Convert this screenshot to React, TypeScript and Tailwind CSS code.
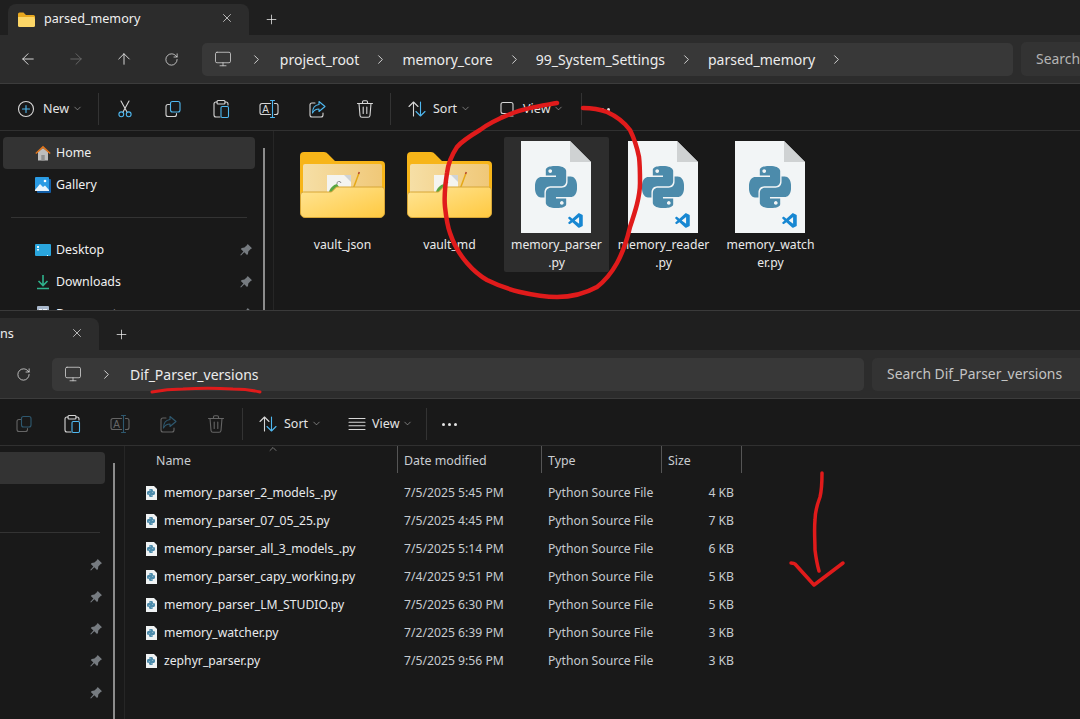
import React from "react";
import { ArrowLeft, ArrowRight, ArrowUp, RotateCw, ChevronRight, ChevronDown, ChevronUp, X, Plus, Monitor } from "lucide-react";
import { SiPython } from "react-icons/si";
import { VscVscode } from "react-icons/vsc";

const GREY = "#d6d6d6";
const BLUE = "#4fb8f0";

function Ico({ dim, children }: { dim?: boolean; children: React.ReactNode }) {
  return (
    <svg width="20" height="20" viewBox="0 0 20 20" fill="none" strokeWidth="1.1" strokeLinecap="round" strokeLinejoin="round" className={dim ? "opacity-40" : ""}>
      {children}
    </svg>
  );
}

const CutIcon = () => (
  <Ico>
    <path d="M6 2l6 11M14 2L8 13" stroke={GREY} />
    <circle cx="6.3" cy="15.3" r="2.4" stroke={BLUE} />
    <circle cx="13.7" cy="15.3" r="2.4" stroke={BLUE} />
  </Ico>
);
const CopyIcon = ({ dim }: { dim?: boolean }) => (
  <Ico dim={dim}>
    <path d="M6.5 5.5H5A2 2 0 0 0 3 7.5v8a2 2 0 0 0 2 2h6.5a2 2 0 0 0 2-2v-1" stroke={GREY} />
    <rect x="7.5" y="2.5" width="9.5" height="10.5" rx="2" stroke={BLUE} />
  </Ico>
);
const PasteIcon = () => (
  <Ico>
    <path d="M9 18H5a2 2 0 0 1-2-2V5a2 2 0 0 1 2-2h1M14 3h1a2 2 0 0 1 2 2v1" stroke={GREY} />
    <rect x="6" y="1.5" width="8" height="3.5" rx="1" stroke={GREY} />
    <rect x="10" y="7.5" width="7.5" height="11" rx="1.2" stroke={BLUE} />
  </Ico>
);
const RenameIcon = ({ dim }: { dim?: boolean }) => (
  <Ico dim={dim}>
    <path d="M11.5 4.500H3a2 2 0 0 0-2 2v7a2 2 0 0 0 2 2h8.500M15.500 4.500H17a2 2 0 0 1 2 2v7a2 2 0 0 1-2 2h-1.500" stroke={GREY} />
    <path d="M11.500 1.500h4M11.500 18.500h4M13.500 1.500v17" stroke={BLUE} />
    <text x="3.200" y="13.500" fontSize="10" fill={GREY} fontFamily="Liberation Sans" stroke="none">A</text>
  </Ico>
);
const ShareIcon = ({ dim }: { dim?: boolean }) => (
  <Ico dim={dim}>
    <path d="M8 4H5a2 2 0 0 0-2 2v10a2 2 0 0 0 2 2h9a2 2 0 0 0 2-2v-2" stroke={GREY} />
    <path d="M12 2.5l6 5-6 5V10c-3 0-5 1-6.5 4 0-5 2.500-8 6.500-8.500z" stroke={BLUE} />
  </Ico>
);
const TrashIcon = ({ dim }: { dim?: boolean }) => (
  <Ico dim={dim}>
    <path d="M2.500 4.500h15M7.500 4.500V3a1.200 1.200 0 0 1 1.200-1.200h2.600A1.200 1.200 0 0 1 12.500 3v1.500M4 4.500l1 12a2 2 0 0 0 2 1.800h6a2 2 0 0 0 2-1.800l1-12M8.200 8v6.500M11.800 8v6.500" stroke={GREY} />
  </Ico>
);
const SortIcon = () => (
  <Ico>
    <path d="M6.500 17V3M2 7.500L6.500 3 11 7.500" stroke={GREY} />
    <path d="M13.500 3v14M9 12.500l4.500 4.500 4.500-4.500" stroke={BLUE} />
  </Ico>
);
const TileViewIcon = () => (
  <Ico>
    <rect x="4" y="3.500" width="12" height="11" rx="2" stroke={GREY} />
    <path d="M4 17h12" stroke={GREY} />
  </Ico>
);
const ListViewIcon = () => (
  <Ico>
    <path d="M2 4.500h16M2 8.200h16M2 11.800h16M2 15.500h16" stroke={GREY} />
  </Ico>
);
const NewIcon = () => (
  <Ico>
    <circle cx="10" cy="10" r="7.500" stroke={GREY} />
    <path d="M10 6.500v7M6.500 10h7" stroke={BLUE} />
  </Ico>
);

const Dots = () => (
  <div className="flex gap-[3px]">
    <span className="w-[3px] h-[3px] rounded-full bg-[#e4e4e4]" />
    <span className="w-[3px] h-[3px] rounded-full bg-[#e4e4e4]" />
    <span className="w-[3px] h-[3px] rounded-full bg-[#e4e4e4]" />
  </div>
);

const Sep = () => <div className="w-px h-8 bg-[#333333]" />;

function IconBtn({ children }: { children: React.ReactNode }) {
  return <div className="w-12 h-8 flex items-center justify-center">{children}</div>;
}

function CmdLabel({ text, className }: { text: string; className?: string }) {
  return (
    <div className={`flex items-center ${className ?? ""}`}>
      <span className="text-[12.500px] text-[#e4e4e4] mt-[1px]">{text}</span>
      <ChevronDown size={11} strokeWidth={1.300} color="#b8b8b8" className="ml-[3px] -mt-[2px]" />
    </div>
  );
}

function PinIcon() {
  return (
    <svg width="14" height="14" viewBox="0 0 14 14" fill="#767b80">
      <path d="M8.700 1l4.300 4.300-1.300.7-2.400 2.400-.3 2.600-1 1L5.300 9.300 2 12.600l-.8-.6 3.200-3.400L1.800 6l1-1 2.600-.4L7.900 2.300z" />
    </svg>
  );
}

function FolderTab() {
  return (
    <svg width="17" height="15" viewBox="0 0 17 15">
      <path d="M0 2a1.500 1.500 0 0 1 1.500-1.500h4L8 3h7.500A1.500 1.500 0 0 1 17 4.500V6H0z" fill="#e8a81f" />
      <path d="M0 5h15.500A1.500 1.500 0 0 1 17 6.500v7a1.500 1.500 0 0 1-1.500 1.500h-14A1.500 1.500 0 0 1 0 13.500z" fill="#fcd667" />
    </svg>
  );
}

function BigFolder({ id }: { id: string }) {
  return (
    <svg width="85" height="67" viewBox="0 0 85 67">
      <defs>
        <linearGradient id={id} x1="0" y1="0" x2="1" y2="1">
          <stop offset="0" stopColor="#ffe596" />
          <stop offset="1" stopColor="#ffc940" />
        </linearGradient>
        <linearGradient id={`${id}b`} x1="0" y1="0" x2="1" y2="0">
          <stop offset="0" stopColor="#f6dfa6" />
          <stop offset="1" stopColor="#f0c878" />
        </linearGradient>
      </defs>
      <path d="M0 5a4 4 0 0 1 4-4h20a5 5 0 0 1 4 2l7 7h46a4 4 0 0 1 4 4v30H0z" fill="#f7b519" />
      <rect x="3" y="13" width="79" height="40" rx="2" fill={`url(#${id}b)`} />
      <rect x="27" y="24" width="24" height="17" fill="#f4f4f0" />
      <path d="M44 24l7 7v-7z" fill="#cfd3d6" />
      <path d="M29 41c1-4 4-7 8-8l2 3-5 5z" fill="#59a541" />
      <path d="M37 33a2 2 0 1 1 4-1" stroke="#8a8a8a" fill="none" />
      <path d="M52 41l7-19" stroke="#e5a817" strokeWidth="1.500" />
      <path d="M58.500 23l.8-2" stroke="#b6452e" strokeWidth="1.500" />
      <path d="M.5 44a3 3 0 0 1 3-3h28l5-5h45a3 3 0 0 1 3 3v23a4.500 4.500 0 0 1-4.500 4.500H5A4.500 4.500 0 0 1 .5 62z" fill={`url(#${id})`} stroke="#d7a637" strokeWidth="1" />
    </svg>
  );
}

function BigPyFile() {
  return (
    <div className="relative w-[70px] h-[92px]">
      <svg width="70" height="92" viewBox="0 0 70 92" className="block">
        <path d="M0 0h49l21 21v71H0z" fill="#f2f5f6" />
        <path d="M49 0l21 21H49z" fill="#cfd2d3" />
      </svg>
      <SiPython size={42} color="#4c8bab" className="absolute left-[14px] top-[25px]" />
      <VscVscode size={18} color="#1787d2" className="absolute left-[46px] top-[71px]" />
    </div>
  );
}

function SmallPyFile() {
  return (
    <div className="relative w-[11px] h-[14px]">
      <svg width="11" height="14" viewBox="0 0 11 14" className="block">
        <path d="M0 0h8l3 3v11H0z" fill="#f0f3f4" />
      </svg>
      <SiPython size={8} color="#4c8bab" className="absolute left-[1px] top-[3px]" />
    </div>
  );
}

function HomeIcon() {
  return (
    <svg width="16" height="16" viewBox="0 0 16 16">
      <path d="M3 7l5-4 5 4v8.500H3z" fill="#bdbdbd" />
      <rect x="6.300" y="10" width="3.400" height="5.500" fill="#8f8f8f" />
      <path d="M.3 8L8 .8 15.700 8l-1 1L8 2.900 1.300 9z" fill="#e2761c" />
    </svg>
  );
}
function GalleryIcon() {
  return (
    <svg width="16" height="16" viewBox="0 0 16 16">
      <rect x="2" y="2" width="14" height="14" rx="1" fill="#135fa8" />
      <rect x="0" y="0" width="14" height="14" rx="1" fill="#2a9be4" />
      <path d="M0 13l5-6 3 3 2-1.500L14 13v1H0z" fill="#e8f4fc" />
      <circle cx="10" cy="4" r="1.300" fill="#ffffff" />
    </svg>
  );
}
function DesktopIcon() {
  return (
    <svg width="16" height="13" viewBox="0 0 16 13">
      <rect width="16" height="12" rx="1" fill="#2aa6de" />
      <rect x="2" y="2" width="2" height="2" fill="#e6f6fd" />
      <rect x="2" y="5" width="2" height="1.500" fill="#e6f6fd" />
      <rect x="12" y="11" width="1" height="1" fill="#e6f6fd" />
    </svg>
  );
}
function DownloadIcon() {
  return (
    <svg width="16" height="16" viewBox="0 0 16 16" fill="none" stroke="#2fb38d" strokeWidth="1.600">
      <path d="M8 1v10M3.500 7L8 11.500 12.500 7M2 14.500h12" />
    </svg>
  );
}
function DocsIcon() {
  return (
    <svg width="16" height="16" viewBox="0 0 16 16">
      <rect x="2" width="12" height="16" rx="1" fill="#a9b8cc" />
      <rect x="4" y="3" width="3" height="2" fill="#f1f4f8" />
      <rect x="8" y="3" width="4" height="1" fill="#f1f4f8" />
    </svg>
  );
}

function Crumbs({ parts }: { parts: string[] }) {
  return (
    <>
      <Monitor size={18} strokeWidth={1.100} color="#d0d0d0" className="ml-[12px] mr-[17px]" />
      {parts.map((p, i) => (
        <React.Fragment key={p}>
          <ChevronRight size={15} strokeWidth={1.500} color="#dcdcdc" />
          <span className={`${i === 0 ? "ml-[16px]" : "ml-[14px]"} mr-[14px] text-[14px] text-[#ececec] mt-[1px]`}>{p}</span>
        </React.Fragment>
      ))}
    </>
  );
}

const files = [
  ["memory_parser_2_models_.py", "7/5/2025 5:45 PM", "4 KB"],
  ["memory_parser_07_05_25.py", "7/5/2025 4:45 PM", "7 KB"],
  ["memory_parser_all_3_models_.py", "7/5/2025 5:14 PM", "6 KB"],
  ["memory_parser_capy_working.py", "7/4/2025 9:51 PM", "5 KB"],
  ["memory_parser_LM_STUDIO.py", "7/5/2025 6:30 PM", "5 KB"],
  ["memory_watcher.py", "7/2/2025 6:39 PM", "3 KB"],
  ["zephyr_parser.py", "7/5/2025 9:56 PM", "3 KB"],
];

const tiles = [
  { name: ["memory_parser", ".py"], selected: true },
  { name: ["memory_reader", ".py"] },
  { name: ["memory_watch", "er.py"] },
];

function Tile({ selected, icon, lines }: { selected?: boolean; icon: React.ReactNode; lines: string[] }) {
  return (
    <div className={`w-[105px] h-[135px] rounded-[2px] flex flex-col items-center ${selected ? "bg-[#2d2d2d]" : ""}`}>
      <div className="h-[99px] flex items-start justify-center">{icon}</div>
      <div className="text-[12.200px] leading-[18px] text-center text-[#eaeaea] whitespace-nowrap">
        {lines.map(l => <div key={l}>{l}</div>)}
      </div>
    </div>
  );
}

function NavRow({ icon, label, pin }: { icon: React.ReactNode; label: string; pin?: boolean }) {
  return (
    <div className="h-8 ml-[3px] w-[252px] flex items-center relative">
      <div className="ml-[32px] w-[16px] flex justify-center">{icon}</div>
      <span className="ml-[5px] text-[12.400px] text-[#f0f0f0]">{label}</span>
      {pin && <div className="absolute right-[2px] top-[9px]"><PinIcon /></div>}
    </div>
  );
}

export default function App() {
  return (
    <div className="relative w-[1080px] h-[719px] overflow-hidden bg-[#191919] font-['Noto_Sans',sans-serif]">
      {/* top window */}
      <div className="h-[310px] flex flex-col overflow-hidden">
        <div className="h-[35px] pt-[4px] bg-[#1f1f1f] flex items-center shrink-0">
          <div className="ml-[8px] w-[241px] h-full flex items-center rounded-t-lg bg-[#2c2c2c] relative pl-[10px]">
            <FolderTab />
            <span className="ml-[9px] text-[12.600px] text-[#f0f0f0]">parsed_memory</span>
            <X size={14} strokeWidth={1.200} color="#f0f0f0" className="absolute right-[15px] top-[7px]" />
          </div>
          <Plus size={15} strokeWidth={1.200} color="#f0f0f0" className="ml-[15px]" />
        </div>
        <div className="h-[49px] bg-[#2c2c2c] border-b border-[#3c3c3c] flex items-center pl-[4px] shrink-0">
          <IconBtn><ArrowLeft size={18} strokeWidth={1.200} color="#e8e8e8" /></IconBtn>
          <IconBtn><ArrowRight size={18} strokeWidth={1.200} color="#6b6b6b" /></IconBtn>
          <IconBtn><ArrowUp size={18} strokeWidth={1.200} color="#e8e8e8" /></IconBtn>
          <IconBtn><RotateCw size={15} strokeWidth={1.200} color="#e8e8e8" /></IconBtn>
          <div className="ml-[6px] w-[812px] h-[33px] rounded-[5px] bg-[#383838] flex items-center">
            <Crumbs parts={["project_root", "memory_core", "99_System_Settings", "parsed_memory"]} />
            <ChevronRight size={15} strokeWidth={1.500} color="#dcdcdc" />
          </div>
          <div className="ml-[8px] flex-1 h-[34px] rounded-l-[5px] bg-[#333333] flex items-center pl-[15px] text-[13.900px] text-[#b4b4b4]">Search</div>
        </div>
        <div className="h-[47px] pt-[4px] bg-[#191919] border-b border-[#303030] flex items-center shrink-0">
          <div className="w-[98px] flex items-center pl-[16px]">
            <NewIcon />
            <CmdLabel text="New" className="ml-[7px]" />
          </div>
          <Sep />
          <div className="w-[2px]" />
          <IconBtn><CutIcon /></IconBtn>
          <IconBtn><CopyIcon /></IconBtn>
          <IconBtn><PasteIcon /></IconBtn>
          <IconBtn><RenameIcon /></IconBtn>
          <IconBtn><ShareIcon /></IconBtn>
          <IconBtn><TrashIcon /></IconBtn>
          <div className="w-[1px]" />
          <Sep />
          <div className="ml-[16px]"><SortIcon /></div>
          <CmdLabel text="Sort" className="ml-[6px]" />
          <div className="ml-[26px]"><TileViewIcon /></div>
          <CmdLabel text="View" className="ml-[6px]" />
          <div className="ml-[17px]"><Sep /></div>
          <div className="ml-[13px]"><Dots /></div>
        </div>
        <div className="flex-1 flex min-h-0">
          <div className="w-[263px] pt-[6px] shrink-0">
            <div className="relative">
              <div className="absolute left-[3px] top-0 w-[252px] h-8 rounded-[4px] bg-[#333333]" />
              <NavRow icon={<HomeIcon />} label="Home" />
            </div>
            <NavRow icon={<GalleryIcon />} label="Gallery" />
            <div className="h-px bg-[#333333] ml-[11px] w-[236px] my-[16px]" />
            <NavRow icon={<DesktopIcon />} label="Desktop" pin />
            <NavRow icon={<DownloadIcon />} label="Downloads" pin />
            <NavRow icon={<DocsIcon />} label="Documents" pin />
          </div>
          <div className="w-[2px] mt-[17px] bg-[#8c8c8c] shrink-0" />
          <div className="w-[8px] shrink-0" />
          <div className="w-px bg-[#262626] shrink-0" />
          <div className="flex-1 pl-[16px] pt-[6px] flex gap-[2px]">
            <Tile icon={<div className="pt-[14px]"><BigFolder id="f1" /></div>} lines={["vault_json"]} />
            <Tile icon={<div className="pt-[14px]"><BigFolder id="f2" /></div>} lines={["vault_md"]} />
            {tiles.map(t => (
              <Tile key={t.name[0]} selected={t.selected} icon={<div className="pt-[4px] pr-[2px]"><BigPyFile /></div>} lines={t.name} />
            ))}
          </div>
        </div>
      </div>

      {/* bottom window */}
      <div className="h-[409px] flex flex-col border-t border-[#3a3a3a] overflow-hidden">
        <div className="h-[39px] pt-[7px] bg-[#1f1f1f] flex items-center shrink-0">
          <div className="w-[99px] h-full rounded-tr-lg bg-[#2c2c2c] relative flex items-center">
            <span className="text-[12.600px] text-[#f0f0f0]">ns</span>
            <X size={14} strokeWidth={1.200} color="#f0f0f0" className="absolute right-[15px] top-[8px]" />
          </div>
          <Plus size={15} strokeWidth={1.200} color="#f0f0f0" className="ml-[15px]" />
        </div>
        <div className="h-[49px] bg-[#2c2c2c] border-b border-[#3c3c3c] flex items-center shrink-0">
          <div className="w-[46px] flex justify-center"><RotateCw size={15} strokeWidth={1.200} color="#e8e8e8" /></div>
          <div className="ml-[6px] w-[812px] h-[33px] rounded-[5px] bg-[#383838] flex items-center">
            <Crumbs parts={["Dif_Parser_versions"]} />
          </div>
          <div className="ml-[8px] flex-1 h-[33px] rounded-l-[5px] bg-[#333333] flex items-center pl-[15px] text-[13.900px] text-[#c4c4c4]">Search Dif_Parser_versions</div>
        </div>
        <div className="h-[47px] pt-[4px] bg-[#191919] border-b border-[#303030] flex items-center shrink-0">
          <IconBtn><CopyIcon dim /></IconBtn>
          <IconBtn><PasteIcon /></IconBtn>
          <IconBtn><RenameIcon dim /></IconBtn>
          <IconBtn><ShareIcon dim /></IconBtn>
          <IconBtn><TrashIcon dim /></IconBtn>
          <div className="w-[2px]" />
          <Sep />
          <div className="ml-[15px]"><SortIcon /></div>
          <CmdLabel text="Sort" className="ml-[6px]" />
          <div className="ml-[25px]"><ListViewIcon /></div>
          <CmdLabel text="View" className="ml-[5px]" />
          <div className="ml-[13px]"><Sep /></div>
          <div className="ml-[15px]"><Dots /></div>
        </div>
        <div className="flex-1 flex min-h-0">
          <div className="w-[113px] pt-[6px] shrink-0">
            <div className="w-[105px] h-8 rounded-r-[4px] bg-[#333333]" />
            <div className="h-8" />
            <div className="h-px bg-[#333333] w-[100px] my-[16px]" />
            {[0, 1, 2, 3, 4].map(i => (
              <div key={i} className="h-8 w-[103px] flex items-center justify-end"><PinIcon /></div>
            ))}
          </div>
          <div className="w-[2px] mt-[17px] bg-[#8c8c8c] shrink-0" />
          <div className="w-[9px] shrink-0" />
          <div className="w-px bg-[#262626] shrink-0" />
          <div className="flex-1 text-[12.200px]">
            <div className="grid grid-cols-[273px_144px_120px_80px] w-fit h-[27px] text-[#c9cdd1] text-[12.400px]">
              <div className="relative border-r border-[#555555] pl-[31px] pt-[4px] flex items-center">
                Name
                <ChevronUp size={12} strokeWidth={1.200} color="#b0b0b0" className="absolute left-[142px] -top-[3px]" />
              </div>
              <div className="border-r border-[#555555] pl-[6px] pt-[4px] flex items-center">Date modified</div>
              <div className="border-r border-[#555555] pl-[6px] pt-[4px] flex items-center">Type</div>
              <div className="border-r border-[#555555] pl-[6px] pt-[4px] flex items-center">Size</div>
            </div>
            <div className="pt-[6px]">
              {files.map(([name, date, size]) => (
                <div key={name} className="grid grid-cols-[273px_144px_120px_80px] w-fit h-7 items-center text-[#c6cbd0]">
                  <div className="flex items-center pl-[21px]">
                    <SmallPyFile />
                    <span className="ml-[7px] text-[#e8eaec]">{name}</span>
                  </div>
                  <div className="pl-[6px]">{date}</div>
                  <div className="pl-[6px]">Python Source File</div>
                  <div className="pr-[8px] text-right">{size}</div>
                </div>
              ))}
            </div>
          </div>
        </div>
      </div>

      {/* red pen marks */}
      <svg width="1080" height="719" viewBox="0 0 1080 719" fill="none" stroke="#e01b1b" strokeWidth="4.500" strokeLinecap="round" strokeLinejoin="round" className="absolute inset-0 pointer-events-none">
        <path d="M557 103C540 106 525 108 513 113C500 118 488 124 480 130C470 136 462 141 457 147C451 156 448 165 447 173C445 186 444 197 445 207C446 216 447 225 450 233C454 245 460 255 467 263C473 270 480 276 487 280C497 285 508 289 520 292C533 295 545 297 557 297C572 297 586 293 597 287C606 280 612 272 617 263C623 252 627 240 630 227C635 212 640 197 640 183C640 173 640 165 639 157C637 147 634 138 630 130C624 122 616 116 607 112C599 109 591 108 583 108" />
        <path d="M152 392C162 390 172 389 183 389C200 388 216 388 233 389C243 389 252 390 260 392" strokeWidth="3" />
        <path d="M822 473C822 481 822 489 820 497C817 505 815 512 815 520C814 530 815 540 815 550C816 558 817 564 819 571" strokeWidth="3.500" />
        <path d="M791 563C792 563 794 563 795 564L814 585L843 563" strokeWidth="3.500" />
      </svg>
    </div>
  );
}
